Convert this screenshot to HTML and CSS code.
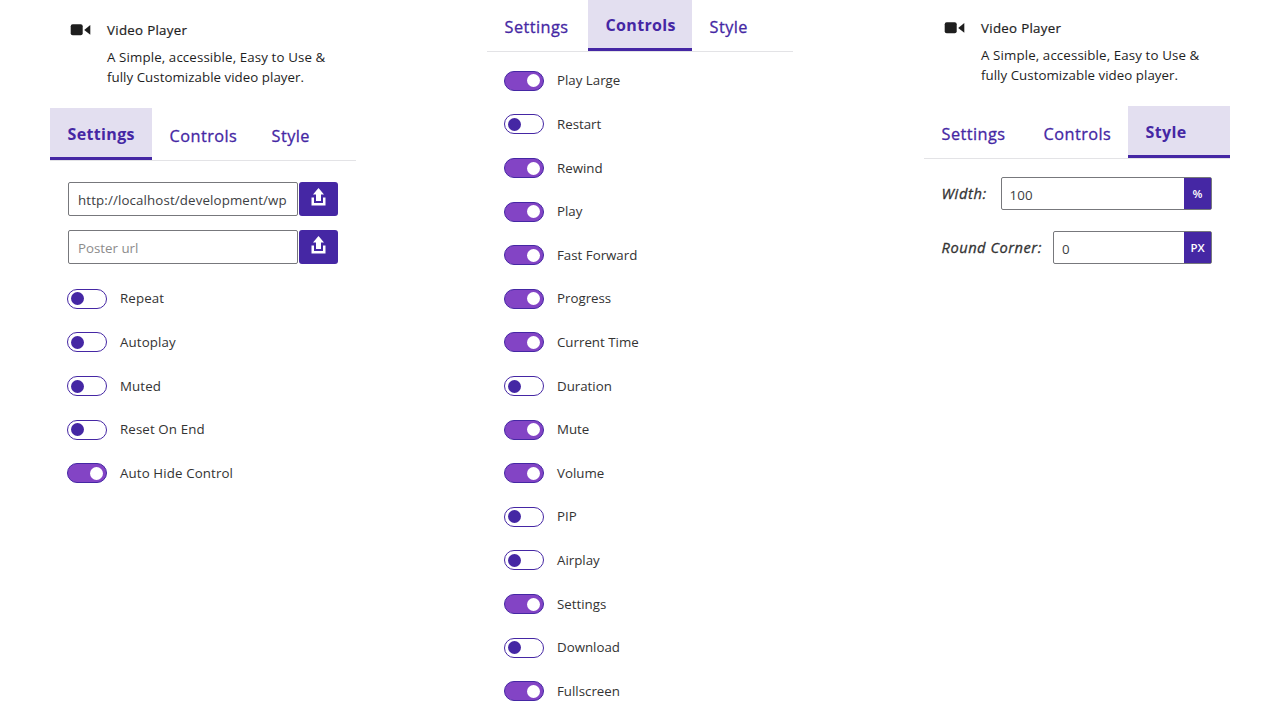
FILE: index.html
```html
<!DOCTYPE html>
<html lang="en">
<head>
<meta charset="utf-8">
<title>Video Player</title>
<link rel="stylesheet" href="styles.css">
</head>
<body>
<main class="panels">
  <section class="panel panel-settings">
    <header class="intro">
      <svg class="camera" width="21" height="12" viewBox="0 0 21 12"><rect x="0.7" y="0.3" width="12" height="11" rx="2"/><path d="M20.300 1v9.700L14.200 6z"/></svg>
      <div>
        <h2>Video Player</h2>
        <p><span class="l1">A Simple, accessible, Easy to Use &amp;</span><br><span class="l2">fully Customizable video player.</span></p>
      </div>
    </header>
    <nav class="tabs"><a class="tab active">Settings</a><a class="tab">Controls</a><a class="tab">Style</a></nav>
    <div class="media">
      <div class="upload"><div class="field">http://localhost/development/wp</div><button class="send"><svg width="15" height="18" viewBox="0 0 15 18"><path d="M7.500 0l5.500 6.500h-3V13H5V6.500H2z"/><path d="M.5 9.500H3V15h9V9.500h2.500v8H.5z"/></svg></button></div>
      <div class="upload"><div class="field empty">Poster url</div><button class="send"><svg width="15" height="18" viewBox="0 0 15 18"><path d="M7.500 0l5.500 6.500h-3V13H5V6.500H2z"/><path d="M.5 9.500H3V15h9V9.500h2.500v8H.5z"/></svg></button></div>
    </div>
    <div class="toggles">
      <div class="row"><i class="switch"></i><span>Repeat</span></div>
      <div class="row"><i class="switch"></i><span>Autoplay</span></div>
      <div class="row"><i class="switch"></i><span>Muted</span></div>
      <div class="row"><i class="switch"></i><span>Reset On End</span></div>
      <div class="row"><i class="switch on"></i><span>Auto Hide Control</span></div>
    </div>
  </section>

  <section class="panel panel-controls">
    <nav class="tabs"><a class="tab">Settings</a><a class="tab active">Controls</a><a class="tab">Style</a></nav>
    <div class="toggles">
      <div class="row"><i class="switch on"></i><span>Play Large</span></div>
      <div class="row"><i class="switch"></i><span>Restart</span></div>
      <div class="row"><i class="switch on"></i><span>Rewind</span></div>
      <div class="row"><i class="switch on"></i><span>Play</span></div>
      <div class="row"><i class="switch on"></i><span>Fast Forward</span></div>
      <div class="row"><i class="switch on"></i><span>Progress</span></div>
      <div class="row"><i class="switch on"></i><span>Current Time</span></div>
      <div class="row"><i class="switch"></i><span>Duration</span></div>
      <div class="row"><i class="switch on"></i><span>Mute</span></div>
      <div class="row"><i class="switch on"></i><span>Volume</span></div>
      <div class="row"><i class="switch"></i><span>PIP</span></div>
      <div class="row"><i class="switch"></i><span>Airplay</span></div>
      <div class="row"><i class="switch on"></i><span>Settings</span></div>
      <div class="row"><i class="switch"></i><span>Download</span></div>
      <div class="row"><i class="switch on"></i><span>Fullscreen</span></div>
    </div>
  </section>

  <section class="panel panel-style">
    <header class="intro">
      <svg class="camera" width="21" height="12" viewBox="0 0 21 12"><rect x="0.7" y="0.3" width="12" height="11" rx="2"/><path d="M20.300 1v9.700L14.200 6z"/></svg>
      <div>
        <h2>Video Player</h2>
        <p><span class="l1">A Simple, accessible, Easy to Use &amp;</span><br><span class="l2">fully Customizable video player.</span></p>
      </div>
    </header>
    <nav class="tabs"><a class="tab">Settings</a><a class="tab">Controls</a><a class="tab active">Style</a></nav>
    <div class="sizes">
      <div class="size"><label class="width-label">Width:</label><div class="unit-field"><span>100</span><b>%</b></div></div>
      <div class="size"><label class="corner-label">Round Corner:</label><div class="unit-field px"><span>0</span><b>PX</b></div></div>
    </div>
  </section>
</main>
</body>
</html>
```
FILE: styles.css
```css
* { box-sizing: border-box; }
body {
  margin: 0;
  height: 720px;
  overflow: hidden;
  background: #fff;
  color: #1e1e1e;
  font-family: "Open Sans", "Noto Sans", sans-serif;
  font-size: 13.3px;
}
.panels { display: flex; gap: 131px; padding-left: 50px; }
.panel { width: 306px; flex: none; }
.panel-controls { margin-top: -1px; }
.panel-style { margin-top: -2px; }

.intro { display: flex; height: 108px; padding: 20px 0 0 20px; }
.camera { flex: none; margin: 4px 16px 0 0; fill: #1e1e1e; }
.intro h2 {
  margin: 0;
  font-size: 13.3px;
  line-height: 20px;
  font-weight: 400;
  letter-spacing: 0.3px;
  -webkit-text-stroke: 0.2px #1e1e1e;
}
.intro p { margin: 8px 0 0; line-height: 19.5px; white-space: nowrap; }
.l1 { letter-spacing: 0.12px; }
.l2 { letter-spacing: 0.04px; }

.tabs { display: flex; height: 53px; border-bottom: 1px solid #e3e3e6; }
.tab {
  flex: none;
  width: 102px;
  height: 52px;
  padding-left: 17.5px;
  line-height: 57px;
  font-size: 16.3px;
  font-weight: 400;
  letter-spacing: 0.45px;
  -webkit-text-stroke: 0.3px #4527a4;
  color: #4527a4;
  white-space: nowrap;
}
.tab.active {
  line-height: 52px;
  font-weight: 700;
  font-size: 16px;
  letter-spacing: 0.35px;
  -webkit-text-stroke: 0;
  background: #e3dff0;
  border-bottom: 3px solid #4527a4;
}
.panel-controls .tab:first-child { width: 101px; }
.panel-controls .tab.active { width: 104px; }

.media { padding: 21px 18px 0; display: grid; gap: 14px; }
.upload { display: flex; gap: 1px; height: 34px; }
.field {
  width: 230px;
  padding-left: 9px;
  border: 1px solid #77787c;
  border-radius: 2px;
  line-height: 34px;
  letter-spacing: 0.13px;
  color: #3c4043;
  white-space: nowrap;
  overflow: hidden;
}
.field.empty { color: #8c8c8c; letter-spacing: 0; }
.send {
  width: 39px;
  padding: 6px 1px 0 0;
  border: 0;
  border-radius: 3px;
  background: #4527a4;
  display: flex;
  justify-content: center;
  align-items: flex-start;
}
.send svg { fill: #fff; }

.toggles { padding-left: 17.4px; }
.panel-settings .toggles { padding-top: 13.1px; }
.panel-controls .toggles { padding-top: 7.1px; }
.row { display: flex; align-items: center; gap: 13px; height: 43.6px; color: #333; }
.row span { line-height: 20px; padding-bottom: 1px; letter-spacing: 0; }
.panel-settings .row span { letter-spacing: 0.12px; }
.switch {
  flex: none;
  width: 39.600px;
  height: 20px;
  padding: 2.5px;
  border: 1px solid #4527a4;
  border-radius: 10px;
  display: flex;
}
.switch::before { content: ""; width: 13px; height: 13px; border-radius: 50%; background: #4527a4; }
.switch.on { background: #8344c5; justify-content: flex-end; }
.switch.on::before { background: #fff; }

.sizes { padding: 18px 18px 0 17.5px; display: grid; gap: 21px; }
.size { display: flex; justify-content: space-between; height: 33px; }
.size label { font-size: 14.700px; font-style: italic; font-weight: 400; -webkit-text-stroke: 0.3px #333; line-height: 33px; color: #333; white-space: nowrap; }
.width-label { letter-spacing: 0.6px; }
.corner-label { letter-spacing: 0.5px; }
.unit-field {
  width: 211.500px;
  display: flex;
  justify-content: space-between;
  border: 1px solid #77787c;
  border-radius: 2px;
  line-height: 34px;
  color: #3c4043;
}
.unit-field.px { width: 159px; }
.unit-field span { padding-left: 8px; letter-spacing: 0.1px; }
.unit-field b {
  width: 27px;
  background: #4527a4;
  color: #fff;
  font-size: 11.5px;
  font-weight: 600;
  line-height: 32px;
  text-align: center;
}
```
